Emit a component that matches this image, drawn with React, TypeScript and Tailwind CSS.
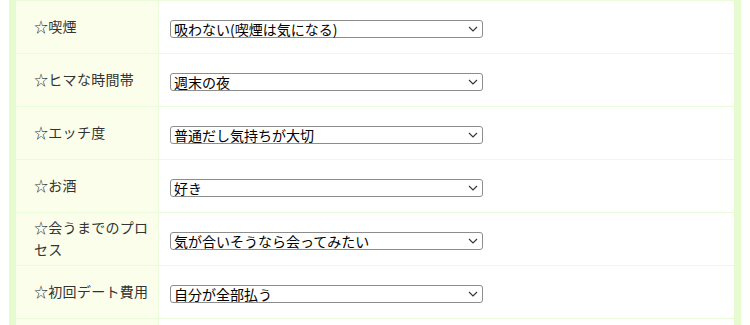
import React from "react";

const rows: { label: string; value: string }[] = [
  { label: "☆喫煙", value: "吸わない(喫煙は気になる)" },
  { label: "☆ヒマな時間帯", value: "週末の夜" },
  { label: "☆エッチ度", value: "普通だし気持ちが大切" },
  { label: "☆お酒", value: "好き" },
  { label: "☆会うまでのプロセス", value: "気が合いそうなら会ってみたい" },
  { label: "☆初回デート費用", value: "自分が全部払う" },
  { label: "", value: "" },
];

function Select({ value }: { value: string }) {
  return (
    <div
      role="combobox"
      className="mt-[3px] flex h-[18px] w-[313px] items-center justify-between rounded-[3px] border border-[#8d8d8d] bg-white pl-[3px] pr-[4px]"
    >
      <span className="whitespace-nowrap text-[14px] leading-[16px] text-black">{value}</span>
      <svg width="10" height="6" viewBox="0 0 10 6" fill="none" className="shrink-0">
        <path d="M1 1 L5 5 L9 1" stroke="#333" strokeWidth="1.1" />
      </svg>
    </div>
  );
}

export default function App() {
  return (
    <div
      className="h-[325px] w-[750px] overflow-hidden bg-white px-[9px]"
      style={{ fontFamily: '"Noto Sans CJK JP", "Noto Sans", sans-serif' }}
    >
      <div className="h-full border-x-[7px] border-[#e6fcd0]">
        <div className="border-t border-[#eafcdb]">
          {rows.map((r, i) => (
            <div
              key={i}
              className="grid h-[53px] grid-cols-[143px_1fr] border-b border-[#eafcdb]"
            >
              <div className="flex items-center border-r border-[#eafcdb] bg-[#fbfeeb] pl-[18px] pr-[8px] pb-[2px] text-[14px] leading-[22px] tracking-[0.3px] text-[#333]">
                {r.label}
              </div>
              <div className="flex items-center bg-white pl-[11px]">
                {r.value && <Select value={r.value} />}
              </div>
            </div>
          ))}
        </div>
      </div>
    </div>
  );
}
